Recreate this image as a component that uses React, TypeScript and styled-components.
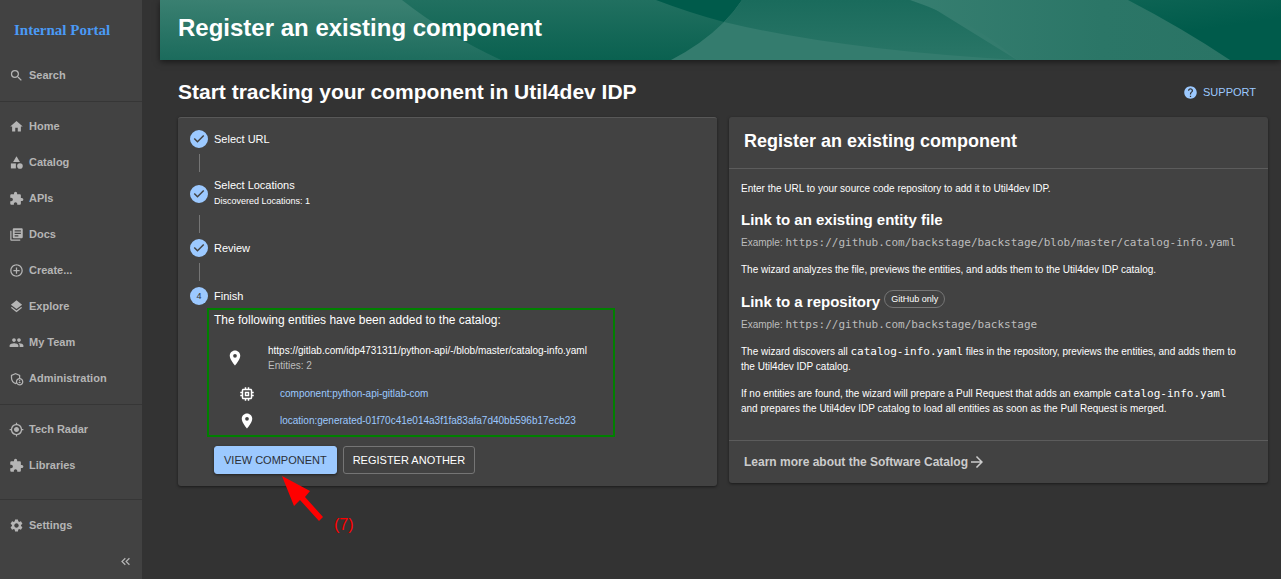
import React from 'react';
import styled, { createGlobalStyle } from 'styled-components';
import type { IconType } from 'react-icons';
import {
  MdAddCircleOutline,
  MdArrowForward,
  MdCategory,
  MdExtension,
  MdGpsFixed,
  MdHelp,
  MdHome,
  MdKeyboardDoubleArrowLeft,
  MdLayers,
  MdLibraryBooks,
  MdLocationOn,
  MdMemory,
  MdOutlineAdminPanelSettings,
  MdPeople,
  MdSearch,
  MdSettings,
} from 'react-icons/md';

const sans = '"Liberation Sans", Arial, Helvetica, sans-serif';
const mono = '"DejaVu Sans Mono", Menlo, monospace';
const blue = '#9cc9ff';

const GlobalStyle = createGlobalStyle`
  *, *::before, *::after { box-sizing: border-box; }
  body {
    margin: 0;
    background: #333333;
    color: #ffffff;
    font-family: ${sans};
    font-size: 11px;
    line-height: 15px;
  }
  h1, h2, h3, p, ul, ol { margin: 0; padding: 0; }
  ul, ol { list-style: none; }
  a { text-decoration: none; }
  svg { display: block; flex: none; }
`;

const Shell = styled.div`
  display: flex;
  min-height: 100vh;
`;

const Sidebar = styled.nav`
  display: flex;
  flex-direction: column;
  flex: none;
  width: 142px;
  background: #424242;
`;

const Logo = styled.a`
  padding: 20px 14px 17px;
  color: #4a9af5;
  font-family: "Liberation Serif", "Times New Roman", serif;
  font-size: 15px;
  font-weight: bold;
  line-height: 20px;
`;

const NavDivider = styled.hr<{ $push?: boolean }>`
  width: 100%;
  height: 1px;
  margin: ${(p) => (p.$push ? 'auto 0 7px' : '8px 0 6px')};
  border: 0;
  background: #363636;
`;

const NavLink = styled.a`
  display: flex;
  align-items: center;
  gap: 5px;
  height: 36px;
  padding-left: 9px;
  color: #b5b5b5;
  font-weight: bold;
`;

const NavButton = styled.button`
  display: flex;
  align-items: center;
  gap: 5px;
  height: 36px;
  padding: 0 0 0 9px;
  border: 0;
  background: none;
  color: #b5b5b5;
  font: bold 11px/15px ${sans};
`;

const Collapse = styled.button`
  display: flex;
  align-items: center;
  align-self: flex-end;
  height: 36px;
  margin-right: 9px;
  padding: 0;
  border: 0;
  background: none;
  color: #b5b5b5;
`;

const Page = styled.main`
  flex: 1;
  min-width: 0;
  margin-left: 18px;
`;

const Header = styled.header`
  display: grid;
  align-items: center;
  height: 60px;
  background: #005b4b;
  box-shadow: 0 2px 6px rgba(0, 0, 0, 0.5);
  > * { grid-area: 1 / 1; }
`;

const HeaderTitle = styled.h1`
  padding: 0 18px 4px;
  font-size: 24px;
  line-height: 28px;
  z-index: 1;
`;

const Content = styled.div`
  padding: 18px 13px 18px 18px;
`;

const ContentHeader = styled.div`
  display: flex;
  align-items: center;
  justify-content: space-between;
  height: 28px;
  margin-bottom: 11px;
  padding-right: 12px;
`;

const ContentTitle = styled.h2`
  font-size: 21px;
  line-height: 26px;
`;

const Support = styled.button`
  display: flex;
  align-items: center;
  gap: 5px;
  padding: 0;
  border: 0;
  background: none;
  color: ${blue};
  font: 11px/15px ${sans};
`;

const Columns = styled.div`
  display: grid;
  grid-template-columns: 1fr 1fr;
  align-items: start;
  gap: 12px;
`;

const Card = styled.section`
  border-radius: 3px;
  background: #424242;
  box-shadow: 0 1px 3px rgba(0, 0, 0, 0.5);
`;

const WizardCard = styled(Card)`
  padding: 12px;
  border-top: 1px solid #585858;
`;

const Step = styled.div`
  display: flex;
  align-items: center;
  gap: 6px;
`;

const StepHint = styled.div`
  font-size: 9px;
  line-height: 16px;
`;

const StepNumber = styled.span`
  display: grid;
  place-items: center;
  width: 18px;
  height: 18px;
  border-radius: 50%;
  background: ${blue};
  color: #333333;
  font-size: 9px;
`;

const Connector = styled.div`
  width: 1px;
  height: 18px;
  margin: 6px 0 6px 9px;
  background: #757575;
`;

const StepBody = styled.div`
  margin: 6px 0 0 24px;
`;

const Entities = styled.div`
  position: relative;
  width: 389px;
  font-size: 10px;
`;

const Highlight = styled.div`
  position: absolute;
  inset: -3px -12px -9px -7px;
  border: 2px solid #008000;
  pointer-events: none;
`;

const EntitiesTitle = styled.p`
  margin-bottom: 14px;
  font-size: 12px;
  line-height: 18px;
`;

const EntityGroup = styled.ul`
  margin-top: 13px;
  padding-left: 12px;
  display: grid;
  gap: 12px;
`;

const EntityRow = styled.li`
  display: flex;
  align-items: center;
  gap: 24px;
  padding-left: 12px;
  white-space: nowrap;
  svg { margin: -2px 0; }
`;

const Muted = styled.div`
  color: #bdbdbd;
`;

const EntityLink = styled.a`
  color: ${blue};
`;

const Actions = styled.div`
  position: relative;
  display: flex;
  gap: 6px;
  margin-top: 18px;
`;

const Action = styled.button<{ $primary?: boolean }>`
  height: 28px;
  padding: 0 9px;
  border: 1px solid ${(p) => (p.$primary ? blue : '#757575')};
  border-radius: 3px;
  background: ${(p) => (p.$primary ? blue : 'transparent')};
  box-shadow: ${(p) => (p.$primary ? '0 1px 3px rgba(0, 0, 0, 0.5)' : 'none')};
  color: ${(p) => (p.$primary ? '#2b2f36' : '#ffffff')};
  font: 11px/15px ${sans};
`;

const Pointer = styled.div`
  position: absolute;
  top: 30px;
  left: 68px;
  display: flex;
  align-items: flex-end;
  gap: 10px;
  color: #ff0000;
  font-size: 16px;
  line-height: 18px;
  pointer-events: none;
  span { margin-bottom: -12px; }
`;

const InfoHeader = styled.div`
  padding: 12px 15px 15px;
  border-bottom: 1px solid #5c5c5c;
`;

const InfoTitle = styled.h2`
  font-size: 18px;
  line-height: 24px;
`;

const InfoBody = styled.div`
  padding: 12px 26px 12px 12px;
  font-size: 10px;
`;

const InfoHeading = styled.h3`
  display: flex;
  align-items: center;
  gap: 4px;
  margin-top: 12px;
  font-size: 15px;
  line-height: 24px;
`;

const Chip = styled.span`
  height: 18px;
  margin: 1px 0 6px;
  padding: 0 6px;
  border: 1px solid #757575;
  border-radius: 9px;
  font-size: 9px;
  font-weight: normal;
  line-height: 16px;
`;

const Paragraph = styled.p`
  margin-bottom: 12px;
`;

const Example = styled(Paragraph)`
  margin-top: 3px;
  color: #bdbdbd;
`;

const Code = styled.code`
  font-family: ${mono};
  font-size: 11px;
  line-height: 1;
  white-space: nowrap;
`;

const InfoFooter = styled.div`
  padding: 12px 15px;
  border-top: 1px solid #5c5c5c;
`;

const LearnMore = styled.a`
  display: flex;
  align-items: center;
  color: #cccccc;
  font-size: 12px;
  font-weight: bold;
  line-height: 18px;
`;

type NavEntry = { label: string; icon: IconType };

const mainNav: NavEntry[] = [
  { label: 'Home', icon: MdHome },
  { label: 'Catalog', icon: MdCategory },
  { label: 'APIs', icon: MdExtension },
  { label: 'Docs', icon: MdLibraryBooks },
  { label: 'Create...', icon: MdAddCircleOutline },
  { label: 'Explore', icon: MdLayers },
  { label: 'My Team', icon: MdPeople },
  { label: 'Administration', icon: MdOutlineAdminPanelSettings },
];

const toolsNav: NavEntry[] = [
  { label: 'Tech Radar', icon: MdGpsFixed },
  { label: 'Libraries', icon: MdExtension },
];

function NavItem({ label, icon: Icon }: NavEntry) {
  return (
    <NavLink href="#">
      <Icon size={15} />
      {label}
    </NavLink>
  );
}

function HeaderWaves() {
  return (
    <svg width="100%" height="60" viewBox="0 0 1121 60" preserveAspectRatio="none" aria-hidden="true">
      <defs>
        <linearGradient id="waveLeft" x1="0.1" y1="0" x2="0" y2="1">
          <stop offset="0" stopColor="#3a8071" />
          <stop offset="1" stopColor="#1b6b5c" />
        </linearGradient>
        <linearGradient id="waveMiddle" x1="0" y1="0" x2="0" y2="1">
          <stop offset="0" stopColor="#217060" />
          <stop offset="1" stopColor="#0a6150" />
        </linearGradient>
        <linearGradient id="waveArc" x1="0" y1="0" x2="0" y2="1">
          <stop offset="0" stopColor="#1a6b5c" />
          <stop offset="1" stopColor="#2a7667" />
        </linearGradient>
        <linearGradient id="waveRight" x1="0" y1="0" x2="1" y2="0">
          <stop offset="0" stopColor="#367e70" />
          <stop offset="0.6" stopColor="#2b7667" />
          <stop offset="1" stopColor="#2a7465" />
        </linearGradient>
        <linearGradient id="waveEdge" x1="0" y1="0" x2="0.4" y2="1">
          <stop offset="0" stopColor="#0d6454" />
          <stop offset="0.6" stopColor="#005b4b" />
        </linearGradient>
      </defs>
      <path d="M960 0H1121V60H1060Z" fill="url(#waveEdge)" />
      <path d="M0 0H496Q530 13 564 22L600 60H0Z" fill="url(#waveMiddle)" />
      <path d="M0 0H242Q285 34 341 60H0Z" fill="url(#waveLeft)" />
      <path d="M511 60Q542 44 564 22Q574 12 582 0H800L900 60Z" fill="#347c6e" />
      <path d="M582 0H760L857 60Q680 50 564 22Q574 12 582 0Z" fill="url(#waveArc)" />
      <path d="M750 0H968Q1022 28 1070 60H857Q815 22 750 0Z" fill="url(#waveRight)" />
    </svg>
  );
}

function DoneIcon() {
  return (
    <svg width="18" height="18" viewBox="0 0 24 24" fill={blue} aria-hidden="true">
      <path d="M12 0a12 12 0 1 0 0 24 12 12 0 0 0 0-24zm-2 17l-5-5 1.4-1.4 3.6 3.6 7.6-7.6L19 8l-9 9z" />
    </svg>
  );
}

function Wizard() {
  return (
    <WizardCard>
      <Step><DoneIcon />Select URL</Step>
      <Connector />
      <Step>
        <DoneIcon />
        <div>
          Select Locations
          <StepHint>Discovered Locations: 1</StepHint>
        </div>
      </Step>
      <Connector />
      <Step><DoneIcon />Review</Step>
      <Connector />
      <Step><StepNumber>4</StepNumber>Finish</Step>
      <StepBody>
        <Entities>
          <EntitiesTitle>The following entities have been added to the catalog:</EntitiesTitle>
          <EntityRow as="div">
            <MdLocationOn size={18} />
            <div>
              https://gitlab.com/idp4731311/python-api/-/blob/master/catalog-info.yaml
              <Muted>Entities: 2</Muted>
            </div>
          </EntityRow>
          <EntityGroup>
            <EntityRow>
              <MdMemory size={18} />
              <EntityLink href="#">component:python-api-gitlab-com</EntityLink>
            </EntityRow>
            <EntityRow>
              <MdLocationOn size={18} />
              <EntityLink href="#">location:generated-01f70c41e014a3f1fa83afa7d40bb596b17ecb23</EntityLink>
            </EntityRow>
          </EntityGroup>
          <Highlight />
        </Entities>
        <Actions>
          <Action $primary>VIEW COMPONENT</Action>
          <Action>REGISTER ANOTHER</Action>
          <Pointer>
            <svg width="42" height="46" viewBox="0 0 42 46" fill="#ff0000" aria-hidden="true">
              <path d="M0 0L28 15L23 21L41 41L37 45L18 24L12 30Z" />
            </svg>
            <span>(7)</span>
          </Pointer>
        </Actions>
      </StepBody>
    </WizardCard>
  );
}

function Info() {
  return (
    <Card>
      <InfoHeader>
        <InfoTitle>Register an existing component</InfoTitle>
      </InfoHeader>
      <InfoBody>
        <Paragraph>Enter the URL to your source code repository to add it to Util4dev IDP.</Paragraph>
        <InfoHeading>Link to an existing entity file</InfoHeading>
        <Example>
          Example: <Code>https://github.com/backstage/backstage/blob/master/catalog-info.yaml</Code>
        </Example>
        <Paragraph>The wizard analyzes the file, previews the entities, and adds them to the Util4dev IDP catalog.</Paragraph>
        <InfoHeading>Link to a repository <Chip>GitHub only</Chip></InfoHeading>
        <Example>
          Example: <Code>https://github.com/backstage/backstage</Code>
        </Example>
        <Paragraph>
          The wizard discovers all <Code>catalog-info.yaml</Code> files in the repository, previews the
          entities, and adds them to the Util4dev IDP catalog.
        </Paragraph>
        <Paragraph>
          If no entities are found, the wizard will prepare a Pull Request that adds an example{' '}
          <Code>catalog-info.yaml</Code> and prepares the Util4dev IDP catalog to load all entities as soon
          as the Pull Request is merged.
        </Paragraph>
      </InfoBody>
      <InfoFooter>
        <LearnMore href="#">
          Learn more about the Software Catalog
          <MdArrowForward size={18} />
        </LearnMore>
      </InfoFooter>
    </Card>
  );
}

export default function App() {
  return (
    <Shell>
      <GlobalStyle />
      <Sidebar>
        <Logo href="#">Internal Portal</Logo>
        <NavButton><MdSearch size={15} />Search</NavButton>
        <NavDivider />
        {mainNav.map((item) => <NavItem key={item.label} {...item} />)}
        <NavDivider />
        {toolsNav.map((item) => <NavItem key={item.label} {...item} />)}
        <NavDivider $push />
        <NavItem label="Settings" icon={MdSettings} />
        <Collapse aria-label="Collapse sidebar"><MdKeyboardDoubleArrowLeft size={15} /></Collapse>
      </Sidebar>
      <Page>
        <Header>
          <HeaderWaves />
          <HeaderTitle>Register an existing component</HeaderTitle>
        </Header>
        <Content>
          <ContentHeader>
            <ContentTitle>Start tracking your component in Util4dev IDP</ContentTitle>
            <Support><MdHelp size={15} />SUPPORT</Support>
          </ContentHeader>
          <Columns>
            <Wizard />
            <Info />
          </Columns>
        </Content>
      </Page>
    </Shell>
  );
}
